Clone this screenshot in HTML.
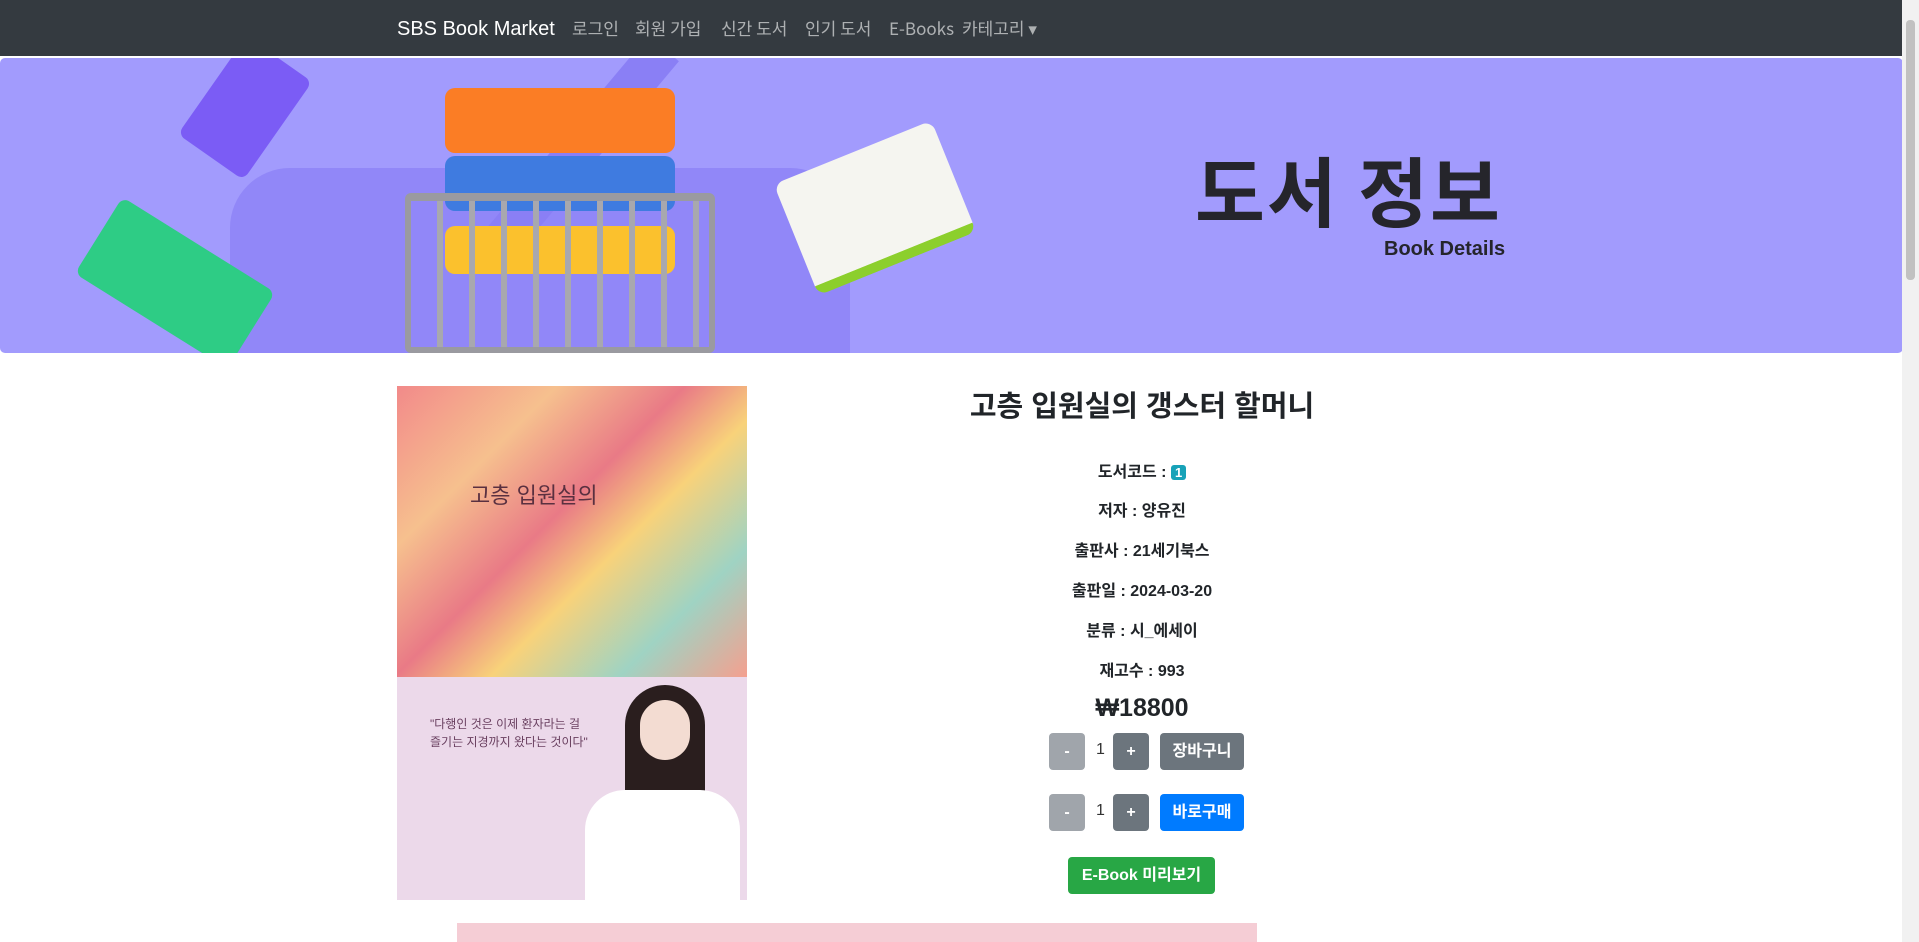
<!DOCTYPE html>
<html><head><meta charset="utf-8"><style>
*{box-sizing:border-box;margin:0;padding:0}
body{width:1919px;height:942px;overflow:hidden;background:#fff;font-family:"Liberation Sans","Noto Sans CJK KR",sans-serif;position:relative}
.nav{position:absolute;left:0;top:0;width:1902px;height:56px;background:#343a40}
.nav span{position:absolute;top:16px;font-size:17px;color:rgba(255,255,255,.6);font-family:"Noto Sans CJK KR",sans-serif;line-height:24px}
.nav .brand{color:#fff;font-size:20px;top:14px;font-family:"Liberation Sans",sans-serif;line-height:30px}
.sb{position:absolute;right:0;top:0;width:17px;height:942px;background:#f1f1f1}
.sb div{position:absolute;left:4px;top:20px;width:9px;height:260px;background:#c1c1c1;border-radius:4px}
.hero{position:absolute;left:0;top:58px;width:1903px;height:295px;background:#a29bfd;border-radius:5px;overflow:hidden}
.abs{position:absolute}
.info{position:absolute;left:942px;width:400px;text-align:center;font-weight:bold;font-size:16px;color:#212529}
.btn{position:absolute;border-radius:4px;color:#fff;font-weight:bold;font-size:16px;text-align:center;line-height:37px}
</style></head><body>
<div class="nav">
<span class="brand" style="left:397px">SBS Book Market</span>
<span style="left:572px">로그인</span><span style="left:635px">회원 가입</span><span style="left:721px">신간 도서</span><span style="left:805px">인기 도서</span><span style="left:889px">E-Books</span><span style="left:962px">카테고리 ▾</span>
</div>
<div class="hero">
<div class="abs" style="left:230px;top:110px;width:620px;height:190px;background:#8a7ff5;border-radius:60px 60px 0 0;opacity:.7"></div>
<div class="abs" style="left:560px;top:-40px;width:40px;height:260px;background:#8a7ff5;transform:rotate(40deg)"></div>
<div class="abs" style="left:185px;top:10px;width:120px;height:80px;background:#7b5cf5;border-radius:8px;transform:rotate(-55deg)"></div>
<div class="abs" style="left:85px;top:180px;width:180px;height:90px;background:#2ecc85;border-radius:8px;transform:rotate(32deg)"></div>
<div class="abs" style="left:445px;top:30px;width:230px;height:65px;background:#fb7d25;border-radius:10px"></div>
<div class="abs" style="left:445px;top:98px;width:230px;height:55px;background:#3f7be0;border-radius:10px"></div>
<div class="abs" style="left:445px;top:168px;width:230px;height:48px;background:#fbc12d;border-radius:10px"></div>
<div class="abs" style="left:405px;top:135px;width:310px;height:160px;border:6px solid #9a9aa0;border-top-width:8px;border-radius:6px;background:repeating-linear-gradient(90deg,transparent 0 26px,#a8a8ae 26px 32px)"></div>
<div class="abs" style="left:790px;top:90px;width:170px;height:120px;background:#f5f5f0;border-radius:10px;border-bottom:10px solid #8ccf2c;transform:rotate(-22deg)"></div>
<div class="abs" style="left:1195px;top:80px;font-size:76px;line-height:100px;font-weight:bold;color:#25252b;letter-spacing:2px;font-family:'Noto Sans CJK KR',sans-serif">도서 정보</div>
<div class="abs" style="left:1384px;top:180px;font-size:20px;font-weight:bold;color:#25252b">Book Details</div>
</div>
<div class="abs" style="left:397px;top:386px;width:350px;height:291px;background:linear-gradient(135deg,#f28a8a 0%,#f6c08e 25%,#e97a86 45%,#f8d27a 60%,#9fd3c3 80%,#f4a08f 100%)"></div>
<div class="abs" style="left:470px;top:478px;font-size:22px;color:#5a3040">고층 입원실의</div>
<div class="abs" style="left:397px;top:677px;width:350px;height:223px;background:#ecd9ea"></div>
<div class="abs" style="left:625px;top:685px;width:80px;height:120px;background:#2a1e1e;border-radius:40px 40px 10px 10px"></div>
<div class="abs" style="left:640px;top:700px;width:50px;height:60px;background:#f3dcd2;border-radius:25px"></div>
<div class="abs" style="left:585px;top:790px;width:155px;height:110px;background:#fff;border-radius:40px 40px 0 0"></div>
<div class="abs" style="left:430px;top:715px;font-size:12px;color:#6a4060;line-height:18px">"다행인 것은 이제 환자라는 걸<br>즐기는 지경까지 왔다는 것이다"</div>
<div class="abs" style="left:457px;top:923px;width:800px;height:19px;background:#f5cdd5"></div>
<div class="abs" style="left:942px;top:383px;width:400px;text-align:center;font-size:29px;font-weight:bold;color:#212529">고층 입원실의 갱스터 할머니</div>
<div class="info" style="top:458px">도서코드 : <span style="background:#17a2b8;color:#fff;border-radius:3px;padding:0 4px;font-size:13px">1</span></div>
<div class="info" style="top:497px">저자 : 양유진</div>
<div class="info" style="top:537px">출판사 : 21세기북스</div>
<div class="info" style="top:577px">출판일 : 2024-03-20</div>
<div class="info" style="top:617px">분류 : 시_에세이</div>
<div class="info" style="top:657px">재고수 : 993</div>
<div class="info" style="top:694px;font-size:25px">₩18800</div>
<div class="btn" style="left:1049px;top:733px;width:36px;height:37px;background:#a0a5ab">-</div>
<div class="abs" style="left:1096px;top:741px;font-size:16px;color:#333">1</div>
<div class="btn" style="left:1113px;top:733px;width:36px;height:37px;background:#6c757d">+</div>
<div class="btn" style="left:1160px;top:733px;width:84px;height:37px;background:#6c757d">장바구니</div>
<div class="btn" style="left:1049px;top:794px;width:36px;height:37px;background:#a0a5ab">-</div>
<div class="abs" style="left:1096px;top:802px;font-size:16px;color:#333">1</div>
<div class="btn" style="left:1113px;top:794px;width:36px;height:37px;background:#6c757d">+</div>
<div class="btn" style="left:1160px;top:794px;width:84px;height:37px;background:#007bff">바로구매</div>
<div class="btn" style="left:1068px;top:857px;width:147px;height:37px;background:#28a745">E-Book 미리보기</div>
<div class="sb"><div></div></div>
</body></html>
